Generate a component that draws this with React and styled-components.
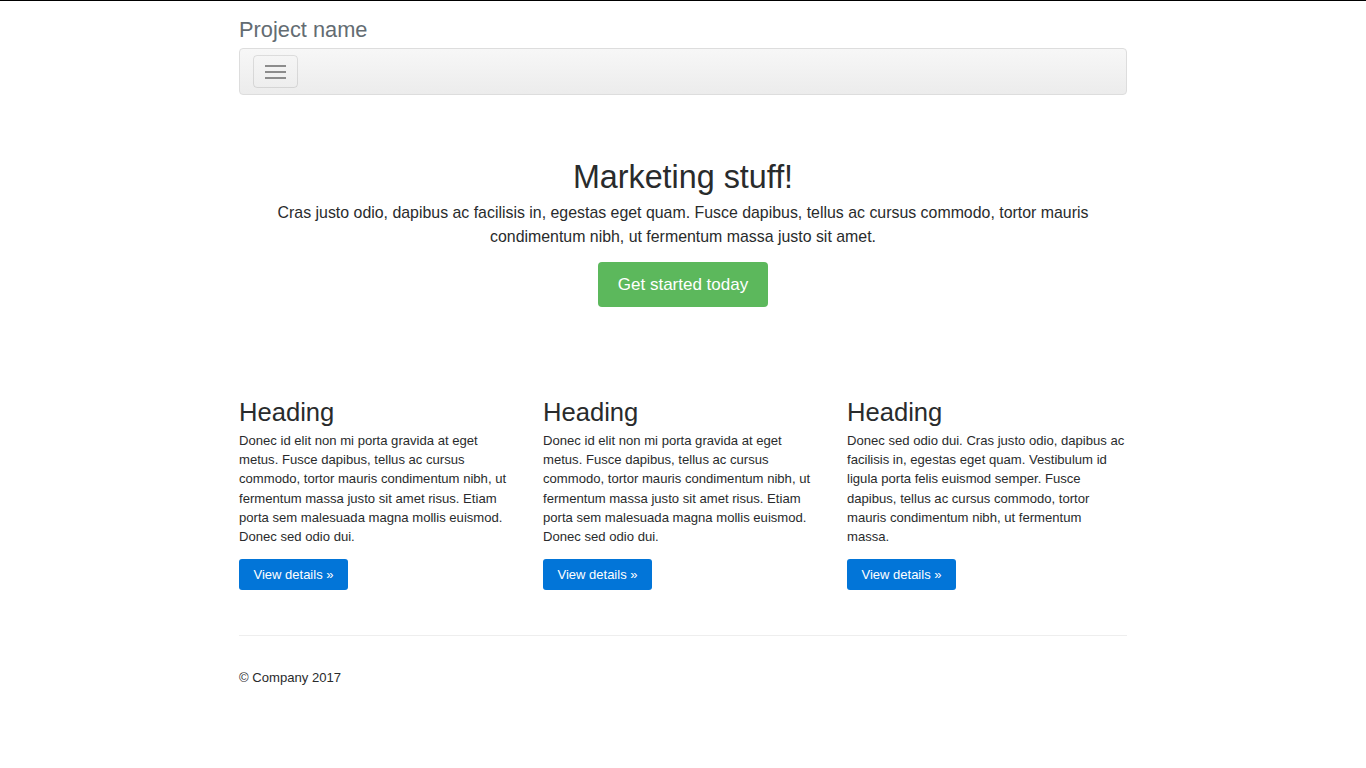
import React from "react";
import styled, { createGlobalStyle } from "styled-components";

const GlobalStyle = createGlobalStyle`
  html, body {
    margin: 0;
    padding: 0;
  }
  body {
    border-top: 1px solid #000;
    font-family: "Liberation Sans", Arial, Helvetica, sans-serif;
    font-size: 13.1px;
    line-height: 19.2px;
    color: #292b2c;
    background: #fff;
  }
`;

const Container = styled.div`
  width: 888px;
  margin: 0 auto;
`;

const Masthead = styled.div`
  padding-top: 17px;
`;

const Brand = styled.h3`
  margin: 0 0 6px;
  font-size: 21.8px;
  line-height: 24px;
  font-weight: normal;
  color: #636c72;
`;

const Navbar = styled.nav`
  display: flex;
  align-items: center;
  padding: 6px 13px;
  border: 1px solid #ddd;
  border-radius: 4px;
  background: linear-gradient(to bottom, #f7f7f7 0%, #ececec 100%);
`;

const Toggler = styled.button`
  display: flex;
  flex-direction: column;
  justify-content: center;
  align-items: center;
  gap: 4px;
  width: 45px;
  height: 33px;
  padding: 0;
  border: 1px solid rgba(0, 0, 0, 0.1);
  border-radius: 4px;
  background: transparent;
  cursor: pointer;
`;

const Bar = styled.span`
  display: block;
  width: 21px;
  height: 2px;
  background: #8c8c8c;
`;

const Jumbotron = styled.section`
  padding: 64px 0 90px;
  text-align: center;
`;

const Title = styled.h1`
  margin: 0 0 6px;
  font-size: 32.3px;
  line-height: 36px;
  font-weight: normal;
`;

const Lead = styled.p`
  margin: 0 0 13px;
  font-size: 15.9px;
  line-height: 24px;
`;

const Button = styled.a`
  display: inline-block;
  color: #fff;
  text-decoration: none;
  border-radius: ${(p) => (p.$large ? "4px" : "3px")};
  background: ${(p) => (p.$variant === "success" ? "#5cb85c" : "#0275d8")};
  font-size: ${(p) => (p.$large ? "17px" : "13px")};
  line-height: ${(p) => (p.$large ? "25px" : "19px")};
  padding: ${(p) => (p.$large ? "10px 20px" : "6px 14.5px")};
`;

const Row = styled.div`
  display: grid;
  grid-template-columns: repeat(3, 1fr);
  column-gap: 24px;
`;

const Col = styled.div``;

const Heading = styled.h2`
  margin: 0 0 4px;
  font-size: 25.6px;
  line-height: 30px;
  font-weight: normal;
`;

const Text = styled.p`
  max-width: 277.5px;
  margin: 0 0 13px;
`;

const Footer = styled.footer`
  margin-top: 45px;
  padding-top: 32px;
  border-top: 1px solid #eee;
`;

const Copy = styled.p`
  margin: 0;
`;

const columns = [
  "Donec id elit non mi porta gravida at eget metus. Fusce dapibus, tellus ac cursus commodo, tortor mauris condimentum nibh, ut fermentum massa justo sit amet risus. Etiam porta sem malesuada magna mollis euismod. Donec sed odio dui.",
  "Donec id elit non mi porta gravida at eget metus. Fusce dapibus, tellus ac cursus commodo, tortor mauris condimentum nibh, ut fermentum massa justo sit amet risus. Etiam porta sem malesuada magna mollis euismod. Donec sed odio dui.",
  "Donec sed odio dui. Cras justo odio, dapibus ac facilisis in, egestas eget quam. Vestibulum id ligula porta felis euismod semper. Fusce dapibus, tellus ac cursus commodo, tortor mauris condimentum nibh, ut fermentum massa.",
];

export default function App() {
  return (
    <>
      <GlobalStyle />
      <Container>
        <Masthead>
          <Brand>Project name</Brand>
          <Navbar>
            <Toggler aria-label="Toggle navigation">
              <Bar />
              <Bar />
              <Bar />
            </Toggler>
          </Navbar>
        </Masthead>

        <Jumbotron>
          <Title>Marketing stuff!</Title>
          <Lead>
            Cras justo odio, dapibus ac facilisis in, egestas eget quam. Fusce
            dapibus, tellus ac cursus commodo, tortor mauris condimentum nibh,
            ut fermentum massa justo sit amet.
          </Lead>
          <Button href="#" $large $variant="success">
            Get started today
          </Button>
        </Jumbotron>

        <Row>
          {columns.map((text, i) => (
            <Col key={i}>
              <Heading>Heading</Heading>
              <Text>{text}</Text>
              <Button href="#">View details »</Button>
            </Col>
          ))}
        </Row>

        <Footer>
          <Copy>© Company 2017</Copy>
        </Footer>
      </Container>
    </>
  );
}
